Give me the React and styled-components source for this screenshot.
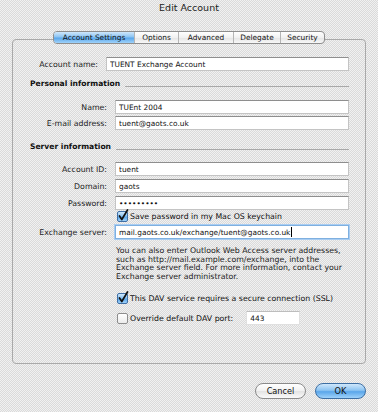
import React from 'react'
import styled, { createGlobalStyle } from 'styled-components'

const GlobalStyle = createGlobalStyle`
  html, body {
    margin: 0;
    padding: 0;
  }
  body {
    font-family: "DejaVu Sans", "Liberation Sans", sans-serif;
    color: #111;
  }
`

const dither = `
  background-color: #e6e6e6;
  background-image: repeating-conic-gradient(#dadada 0 25%, #f1f1f1 0 50%);
  background-size: 2px 2px;
`

const aqua = `
  background: linear-gradient(#cfe7fb 0%, #8cc4f2 45%, #5aa6ea 55%, #9fd2fa 100%);
`

const CheckIcon = ({ checked }) => (
  <Check checked={checked}>
    {checked && (
      <svg width="12" height="13" viewBox="0 0 12 13">
        <path d="M2.5 7 L4.8 10.5 L10.5 1" fill="none" stroke="#111" strokeWidth="1.7" strokeLinecap="round" strokeLinejoin="round" />
      </svg>
    )}
  </Check>
)

const tabs = [
  { label: 'Account Settings', width: 80, active: true },
  { label: 'Options', width: 44 },
  { label: 'Advanced', width: 55 },
  { label: 'Delegate', width: 47 },
  { label: 'Security', width: 44 },
]

const App = () => (
  <Window>
    <GlobalStyle />
    <Title>Edit Account</Title>
    <GroupBox>
      <TabBar>
        {tabs.map(t => (
          <Tab key={t.label} active={t.active} style={{ width: t.width }}>{t.label}</Tab>
        ))}
      </TabBar>

      <Row top={13}>
        <Label width={85}>Account name:</Label>
        <Field defaultValue="TUENT Exchange Account" readOnly />
      </Row>

      <Section top={8}>
        <SectionTitle>Personal information</SectionTitle>
        <Rule />
      </Section>

      <Row top={11}>
        <Label width={94}>Name:</Label>
        <Field defaultValue="TUEnt 2004" readOnly />
      </Row>
      <Row top={2}>
        <Label width={94}>E-mail address:</Label>
        <Field defaultValue="tuent@gaots.co.uk" readOnly />
      </Row>

      <Section top={12}>
        <SectionTitle>Server information</SectionTitle>
        <Rule />
      </Section>

      <Row top={10}>
        <Label width={94}>Account ID:</Label>
        <Field defaultValue="tuent" readOnly />
      </Row>
      <Row top={3}>
        <Label width={94}>Domain:</Label>
        <Field defaultValue="gaots" readOnly />
      </Row>
      <Row top={3}>
        <Label width={94}>Password:</Label>
        <Field type="password" defaultValue="xxxxxxxxx" readOnly />
      </Row>

      <CheckRow top={0}>
        <CheckIcon checked />
        <CheckText>Save password in my Mac OS keychain</CheckText>
      </CheckRow>

      <Row top={2}>
        <Label width={94}>Exchange server:</Label>
        <FieldBox focused>
          mail.gaots.co.uk/exchange/tuent@gaots.co.uk<Caret />
        </FieldBox>
      </Row>

      <Help>
        You can also enter Outlook Web Access server addresses,<br />
        such as http://mail.example.com/exchange, into the<br />
        Exchange server field. For more information, contact your<br />
        Exchange server administrator.
      </Help>

      <CheckRow top={10}>
        <CheckIcon checked />
        <CheckText>This DAV service requires a secure connection (SSL)</CheckText>
      </CheckRow>

      <CheckRow top={7}>
        <CheckIcon />
        <CheckText>Override default DAV port:</CheckText>
        <PortField defaultValue="443" readOnly />
      </CheckRow>
    </GroupBox>

    <ButtonBar>
      <Button>Cancel</Button>
      <Button primary>OK</Button>
    </ButtonBar>
  </Window>
)

const Window = styled.div`
  ${dither}
  width: 378px;
  height: 412px;
  box-sizing: border-box;
  padding: 0 12px;
  display: flex;
  flex-direction: column;
  overflow: hidden;
`

const Title = styled.div`
  height: 16px;
  line-height: 15px;
  text-align: center;
  font-size: 9.5px;
  color: #222;
`

const GroupBox = styled.div`
  margin-top: 23px;
  height: 325px;
  box-sizing: border-box;
  border: 1px solid #a9a9a9;
  border-radius: 4px;
  padding: 0 16px 0 0;
  display: flex;
  flex-direction: column;
`

const TabBar = styled.div`
  align-self: center;
  margin-top: -9px;
  margin-left: 16px;
  height: 13px;
  display: flex;
  border: 1px solid #8d8d8d;
  border-radius: 4px;
  overflow: hidden;
  box-sizing: border-box;
  background: linear-gradient(#ffffff, #f1f1f1 50%, #e4e4e4 51%, #f7f7f7);
`

const Tab = styled.div`
  box-sizing: border-box;
  font-size: 7.4px;
  line-height: 11px;
  text-align: center;
  color: #111;
  border-left: 1px solid #b5b5b5;
  &:first-child {
    border-left: 0;
  }
  ${p => p.active && aqua}
`

const Row = styled.div`
  display: flex;
  align-items: center;
  margin-top: ${p => p.top}px;
  height: 14px;
`

const Label = styled.div`
  width: ${p => p.width}px;
  flex: none;
  text-align: right;
  font-size: 7.8px;
  color: #222;
  margin-right: 8px;
  white-space: nowrap;
`

const fieldLook = `
  height: 14px;
  box-sizing: border-box;
  margin: 0;
  padding: 0 3px;
  font-family: "DejaVu Sans", sans-serif;
  font-size: 7.4px;
  color: #111;
  background: #fff;
  border: 1px solid #c4c4c4;
  border-top-color: #8e8e8e;
  outline: none;
`

const Field = styled.input`
  ${fieldLook}
  flex: 1;
  min-width: 0;
`

const FieldBox = styled.div`
  ${fieldLook}
  flex: 1;
  min-width: 0;
  display: flex;
  align-items: center;
  white-space: nowrap;
  ${p => p.focused && `
    border-color: #7fb0e0;
    box-shadow: 0 0 0 1px #a9cdf2;
  `}
`

const Caret = styled.span`
  width: 1px;
  height: 10px;
  margin-left: 1px;
  background: #000;
`

const Section = styled.div`
  display: flex;
  align-items: flex-end;
  margin-top: ${p => p.top}px;
  padding-left: 17px;
  height: 10px;
`

const SectionTitle = styled.div`
  font-size: 7.6px;
  font-weight: bold;
  line-height: 10px;
  color: #111;
  white-space: nowrap;
`

const Rule = styled.div`
  flex: 1;
  margin: 0 0 2px 5px;
  border-bottom: 1px solid #a8a8a8;
`

const CheckRow = styled.div`
  display: flex;
  align-items: center;
  margin-top: ${p => p.top}px;
  margin-left: 104px;
  height: 13px;
`

const Check = styled.div`
  position: relative;
  width: 11px;
  height: 11px;
  flex: none;
  box-sizing: border-box;
  border-radius: 2px;
  border: 1px solid ${p => (p.checked ? '#3f6fa6' : '#8d8d8d')};
  ${p => (p.checked ? aqua : 'background: linear-gradient(#ffffff, #ececec);')}
  svg {
    position: absolute;
    left: -1px;
    top: -3px;
  }
`

const CheckText = styled.span`
  margin-left: 2px;
  font-size: 7.8px;
  color: #111;
  white-space: nowrap;
`

const PortField = styled(Field)`
  flex: none;
  width: 54px;
  margin-left: 13px;
  border-color: #e0e0e0;
  border-top-color: #bdbdbd;
`

const Help = styled.p`
  margin: 8px 0 0 103px;
  font-size: 7.8px;
  line-height: 8.7px;
  color: #222;
  white-space: nowrap;
`

const ButtonBar = styled.div`
  display: flex;
  justify-content: flex-end;
  gap: 9px;
  margin-top: 19px;
`

const Button = styled.button`
  width: 51px;
  height: 16px;
  box-sizing: border-box;
  margin: 0;
  padding: 0;
  border-radius: 9px;
  font-family: "DejaVu Sans", sans-serif;
  font-size: 8.2px;
  color: #111;
  border: 1px solid ${p => (p.primary ? '#3c6ea3' : '#8a8a8a')};
  ${p => (p.primary ? aqua : 'background: linear-gradient(#ffffff, #f1f1f1 50%, #e3e3e3 51%, #fafafa);')}
`

export default App
